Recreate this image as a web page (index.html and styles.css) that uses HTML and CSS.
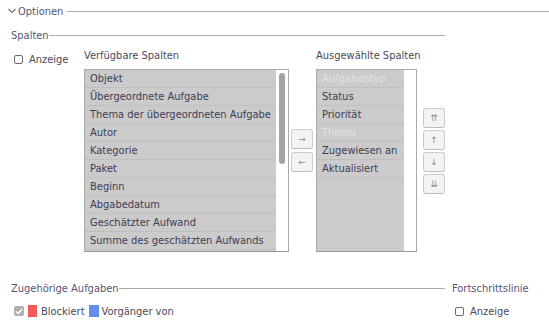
FILE: index.html
```html
<!DOCTYPE html>
<html lang="de">
<head>
    <meta charset="UTF-8">
    <title>Gantt Optionen</title>
    <link rel="stylesheet" href="styles.css">
</head>
<body>
    <div class="options">
        <div class="legend-row">
            <svg class="chevron" width="8" height="6" viewBox="0 0 8 6"><path d="M0.5 1 L4 4.5 L7.5 1" fill="none" stroke="#6b6b8a" stroke-width="1.1"/></svg>
            <span class="legend-text">Optionen</span>
            <span class="rule"></span>
        </div>

        <!-- Spalten -->
        <section class="columns-set">
            <div class="set-title">
                <span>Spalten</span>
                <span class="rule"></span>
            </div>
            <div class="columns-body">
                <label class="check-label anzeige">
                    <input type="checkbox" class="box"> Anzeige
                </label>

                <div class="pick pick-available">
                    <div class="pick-label">Verfügbare Spalten</div>
                    <div class="listbox">
                        <ul class="items">
                            <li>Objekt</li>
                            <li>Übergeordnete Aufgabe</li>
                            <li>Thema der übergeordneten Aufgabe</li>
                            <li>Autor</li>
                            <li>Kategorie</li>
                            <li>Paket</li>
                            <li>Beginn</li>
                            <li>Abgabedatum</li>
                            <li>Geschätzter Aufwand</li>
                            <li>Summe des geschätzten Aufwands</li>
                        </ul>
                        <div class="scrollbar"><div class="thumb"></div></div>
                    </div>
                </div>

                <div class="buttons">
                    <button class="btn">&rarr;</button>
                    <button class="btn">&larr;</button>
                </div>

                <div class="pick pick-selected">
                    <div class="pick-label">Ausgewählte Spalten</div>
                    <div class="listbox">
                        <ul class="items">
                            <li class="disabled">Aufgabentyp</li>
                            <li>Status</li>
                            <li>Priorität</li>
                            <li class="disabled">Thema</li>
                            <li>Zugewiesen an</li>
                            <li>Aktualisiert</li>
                        </ul>
                        <div class="scrollbar"></div>
                    </div>
                </div>

                <div class="buttons buttons-order">
                    <button class="btn">&#8648;</button>
                    <button class="btn">&uarr;</button>
                    <button class="btn">&darr;</button>
                    <button class="btn">&#8650;</button>
                </div>
            </div>
        </section>

        <!-- Bottom row -->
        <div class="bottom">
            <section class="relations">
                <div class="set-title">
                    <span>Zugehörige Aufgaben</span>
                    <span class="rule"></span>
                </div>
                <div class="relation-row">
                    <span class="box box-checked-disabled">
                        <svg width="8" height="7" viewBox="0 0 8 7"><path d="M1 3.5 L3.2 5.5 L7 1.2" fill="none" stroke="#fff" stroke-width="1.5"/></svg>
                    </span>
                    <span class="swatch swatch-blocks"></span>
                    <span>Blockiert</span>
                    <span class="swatch swatch-precedes"></span>
                    <span>Vorgänger von</span>
                </div>
            </section>
            <section class="progress">
                <div class="set-title">
                    <span>Fortschrittslinie</span>
                </div>
                <label class="check-label progress-check">
                    <input type="checkbox" class="box"> Anzeige
                </label>
            </section>
        </div>
    </div>
</body>
</html>
```

FILE: styles.css
```css
* {
    margin: 0;
    padding: 0;
    box-sizing: border-box;
}

body {
    font-family: 'DejaVu Sans Condensed', 'DejaVu Sans', sans-serif;
    font-stretch: condensed;
    font-size: 11px;
    color: #4a4a5a;
    background: #fff;
    width: 549px;
    height: 332px;
    overflow: hidden;
}

.rule {
    flex: 1;
    height: 1px;
    background: #aaa;
}

/* Optionen header */
.legend-row {
    display: flex;
    align-items: center;
    height: 22px;
    padding-left: 8px;
}

.chevron {
    margin-right: 2px;
}

.legend-text {
    color: #555570;
    margin-right: 4px;
}

/* fieldset-like titles */
.set-title {
    display: flex;
    align-items: center;
    height: 14px;
    color: #555575;
    white-space: nowrap;
}

.columns-set {
    margin: 6px 0 0 11px;
    width: 434px;
}

.columns-body {
    display: flex;
    align-items: center;
    margin-top: 7px;
    height: 203px;
}

.columns-body > * {
    flex-shrink: 0;
}

.check-label {
    display: flex;
    align-items: center;
    gap: 6px;
    color: #4a4a5a;
}

.anzeige {
    align-self: flex-start;
    margin: 4px 0 0 3px;
    width: 70px;
}

.box {
    appearance: none;
    -webkit-appearance: none;
    width: 9px;
    height: 9px;
    border: 1px solid #6a6a6a;
    border-radius: 2px;
    background: #fff;
    display: inline-flex;
    align-items: center;
    justify-content: center;
    flex-shrink: 0;
}

.pick-available {
    width: 205px;
}

.pick-selected {
    width: 101px;
}

.pick-label {
    height: 14px;
    line-height: 14px;
    margin-bottom: 6px;
    white-space: nowrap;
}

.listbox {
    display: flex;
    border: 1px solid #aaa;
    border-bottom-color: #999;
    background: #fff;
    height: 183px;
    overflow: hidden;
}

.items {
    list-style: none;
    flex: 1;
    background: #cbcbcb;
}

.items li {
    height: 18px;
    line-height: 17px;
    padding-left: 5px;
    border-bottom: 1px dotted #b3b3b3;
    color: #3d3d55;
    white-space: nowrap;
    overflow: hidden;
}

.items li.disabled {
    color: #e2e2e2;
}

.scrollbar {
    width: 12px;
    flex-shrink: 0;
    background: #fff;
    padding: 3px 0 0 3px;
}

.thumb {
    width: 6px;
    height: 91px;
    border-radius: 3px;
    background: #a3a3a3;
}

.buttons {
    display: flex;
    flex-direction: column;
    gap: 3px;
    margin: 0 3px 0 2px;
}

.buttons-order {
    gap: 2px;
    margin-left: 6px;
}

.btn {
    width: 22px;
    height: 20px;
    border: 1px solid #ccc;
    border-bottom-color: #bbb;
    border-radius: 3px;
    background: #f3f3f3;
    color: #8a8a9a;
    font-family: 'DejaVu Sans', sans-serif;
    font-size: 9px;
    line-height: 18px;
    text-align: center;
}

/* bottom row */
.bottom {
    display: flex;
    margin-top: 29px;
    padding-left: 11px;
}

.relations {
    width: 434px;
}

.relation-row {
    display: flex;
    align-items: center;
    margin-top: 9px;
    padding-left: 3px;
    height: 14px;
}

.box-checked-disabled {
    border: none;
    background: #b0b0b0;
    width: 10px;
    height: 10px;
    margin-right: 4px;
}

.swatch {
    display: inline-block;
    width: 9px;
    height: 12px;
    margin-right: 4px;
}

.swatch-blocks {
    background: #f55a5a;
}

.swatch-precedes {
    background: #628fe8;
    width: 10px;
    margin-left: 4px;
    margin-right: 3px;
}

.progress {
    margin-left: 7px;
}

.progress-check {
    margin: 9px 0 0 3px;
    height: 14px;
}
```
